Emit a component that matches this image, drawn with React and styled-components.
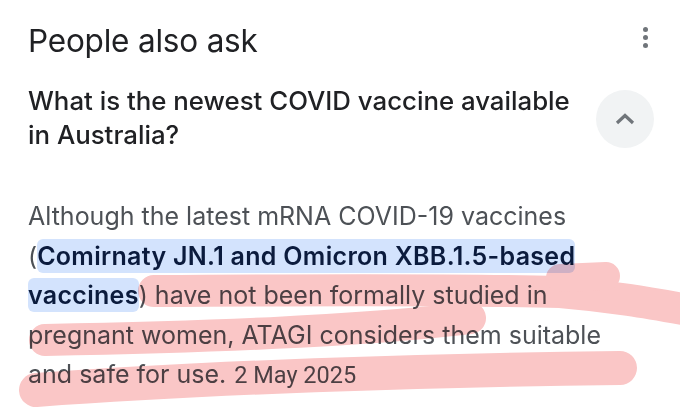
import React from 'react';
import styled, { createGlobalStyle } from 'styled-components';

const GlobalStyle = createGlobalStyle`
  html, body {
    margin: 0;
    padding: 0;
    background: #ffffff;
  }
  body {
    font-family: Inter, Roboto, "Noto Sans", Arial, sans-serif;
    -webkit-font-smoothing: antialiased;
  }
`;

const Card = styled.div`
  position: relative;
  width: 680px;
  height: 415px;
  overflow: hidden;
  box-sizing: border-box;
  padding: 21px 0 0 28px;
  background: #fff;
`;

const Header = styled.div`
  display: flex;
  justify-content: space-between;
  align-items: flex-start;
  padding-right: 30px;
`;

const Title = styled.h2`
  margin: 0;
  font-size: 31.5px;
  font-weight: 400;
  line-height: 40px;
  color: #202124;
  letter-spacing: -0.2px;
`;

const MoreButton = styled.button`
  display: flex;
  flex-direction: column;
  align-items: center;
  gap: 3px;
  margin-top: 4px;
  padding: 2px;
  border: none;
  background: none;
`;

const Dot = styled.span`
  width: 5px;
  height: 5px;
  border-radius: 50%;
  background: #70757a;
`;

const QuestionRow = styled.div`
  display: flex;
  justify-content: space-between;
  align-items: flex-start;
  margin-top: 23px;
  padding-right: 26px;
`;

const Question = styled.h3`
  margin: 0;
  max-width: 550px;
  font-size: 25.8px;
  font-weight: 500;
  line-height: 34px;
  color: #202124;
`;

const ToggleButton = styled.button`
  flex: none;
  width: 58px;
  height: 58px;
  margin-top: 6px;
  border: none;
  border-radius: 50%;
  background: #f1f3f4;
  display: flex;
  align-items: center;
  justify-content: center;
`;

const Answer = styled.p`
  margin: 45px 0 0;
  font-size: 25px;
  line-height: 39.5px;
  color: #4d5156;
`;

const Mark = styled.span`
  background: #d3e3fd;
  color: #0b1b3d;
  font-weight: 600;
  letter-spacing: 0.3px;
  border-radius: 6px;
  padding: 2px 0;
  box-decoration-break: clone;
  -webkit-box-decoration-break: clone;
`;

const DateText = styled.span`
  margin-left: 8px;
  font-family: Roboto, sans-serif;
  font-size: 23.5px;
  color: #4d5156;
`;

const Scribble = styled.svg`
  position: absolute;
  left: 0;
  top: 0;
  pointer-events: none;
  mix-blend-mode: multiply;
`;

export default function App() {
  return (
    <>
      <GlobalStyle />
      <Card>
        <Header>
          <Title>People also ask</Title>
          <MoreButton aria-label="More options">
            <Dot />
            <Dot />
            <Dot />
          </MoreButton>
        </Header>
        <QuestionRow>
          <Question>What is the newest COVID vaccine available in Australia?</Question>
          <ToggleButton aria-label="Collapse">
            <svg width="22" height="14" viewBox="0 0 22 14">
              <path d="M3 11 L11 3.5 L19 11" fill="none" stroke="#70757a" strokeWidth="3.2" />
            </svg>
          </ToggleButton>
        </QuestionRow>
        <Answer>
          Although the latest mRNA COVID-19 vaccines<br />
          (<Mark>Comirnaty JN.1 and Omicron XBB.1.5-based<br />vaccines</Mark>) have not been formally studied in<br />
          pregnant women, ATAGI considers them suitable<br />
          and safe for use.
          <DateText>2 May 2025</DateText>
        </Answer>
        <Scribble width="680" height="415" viewBox="0 0 680 415">
          <g fill="none" stroke="#fac6c6" strokeLinecap="round" strokeLinejoin="round">
            <path d="M154 291 C 300 290, 450 289, 560 292 C 620 297, 660 305, 700 312" strokeWidth="32" />
            <path d="M560 278 L 606 276" strokeWidth="28" />
            <path d="M45 340 C 200 337, 350 332, 470 318" strokeWidth="32" />
            <path d="M36 390 C 200 378, 420 370, 620 368" strokeWidth="34" />
          </g>
        </Scribble>
      </Card>
    </>
  );
}
